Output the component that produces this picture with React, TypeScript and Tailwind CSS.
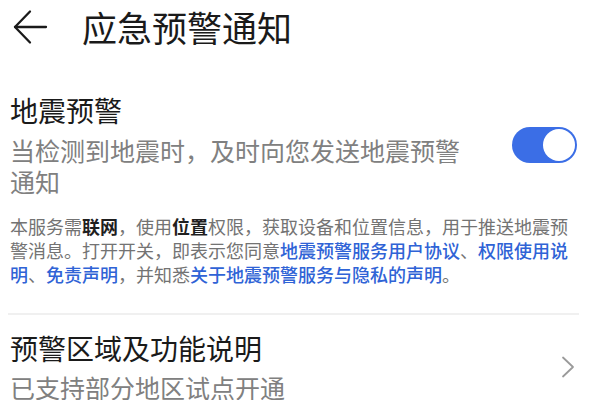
import React from 'react'

const FONT = '"Noto Sans CJK SC", "Noto Sans", sans-serif'

function BackArrow() {
  return (
    <svg width="36" height="36" viewBox="0 0 36 36" fill="none" stroke="#1a1a1a" strokeWidth="2.3" strokeLinecap="round" strokeLinejoin="round">
      <path d="M34 18H3" />
      <path d="M18 2.5L3 18l15 15.5" />
    </svg>
  )
}

function Toggle() {
  return (
    <div className="w-[65px] h-[36px] rounded-full bg-[#3b6ee6] flex items-center justify-end pr-[2px]">
      <div className="w-[32px] h-[32px] rounded-full bg-white" />
    </div>
  )
}

function Chevron() {
  return (
    <svg width="14" height="22" viewBox="0 0 14 22" fill="none" stroke="#9a9a9a" strokeWidth="1.8" strokeLinecap="round" strokeLinejoin="round">
      <path d="M2 1.5l10 9.5-10 9.5" />
    </svg>
  )
}

export default function App() {
  return (
    <div className="w-[600px] h-[400px] bg-white overflow-hidden" style={{ fontFamily: FONT }}>
      {/* header */}
      <div className="flex items-center h-[54px] pl-[12px]">
        <BackArrow />
        <span className="ml-[34px] text-[35px] leading-[40px] text-[#1a1a1a]">应急预警通知</span>
      </div>

      {/* earthquake toggle */}
      <div className="flex items-center justify-between pl-[10px] pr-[23px] mt-[38px]">
        <div className="w-[470px]">
          <div className="text-[28px] leading-[36px] text-[#1a1a1a]">地震预警</div>
          <div className="mt-[7px] text-[25px] leading-[31px] text-[#808080]">当检测到地震时，及时向您发送地震预警通知</div>
        </div>
        <Toggle />
      </div>

      {/* notice */}
      <p className="mt-[17px] pl-[10px] w-[572px] text-[18px] leading-[24px] text-[#737373]">
        本服务需<b className="font-bold text-[#1f1f1f]">联网</b>，使用<b className="font-bold text-[#1f1f1f]">位置</b>权限，获取设备和位置信息，用于推送地震预警消息。打开开关，即表示您同意<span className="font-medium text-[#2f63d6]">地震预警服务用户协议</span>、<span className="font-medium text-[#2f63d6]">权限使用说明</span>、<span className="font-medium text-[#2f63d6]">免责声明</span>，并知悉<span className="font-medium text-[#2f63d6]">关于地震预警服务与隐私的声明</span>。
      </p>

      {/* divider */}
      <div className="mt-[27px] ml-[8px] w-[571px] h-[2px] bg-[#f0f0f0]" />

      {/* region row */}
      <div className="flex items-center justify-between pl-[10px] pr-[25px] mt-[15px]">
        <div>
          <div className="text-[28px] leading-[36px] text-[#1a1a1a]">预警区域及功能说明</div>
          <div className="mt-[6px] text-[25px] leading-[31px] text-[#808080]">已支持部分地区试点开通</div>
        </div>
        <Chevron />
      </div>
    </div>
  )
}
